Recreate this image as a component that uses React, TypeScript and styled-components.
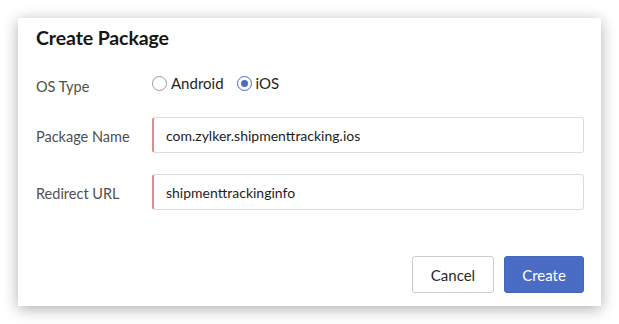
import React, { useState } from "react";
import styled, { createGlobalStyle } from "styled-components";

const Global = createGlobalStyle`
  html, body { margin: 0; padding: 0; background: #ffffff; }
  body { font-family: Lato, "Open Sans", "Liberation Sans", sans-serif; }
  * { box-sizing: border-box; }
`;

const Page = styled.div`
  width: 619px;
  height: 324px;
  padding: 18px;
`;

const Dialog = styled.div`
  width: 583px;
  height: 288px;
  background: #ffffff;
  box-shadow: 0 3px 14px rgba(0, 0, 0, 0.32);
  padding: 8px 17px 13px 18px;
  display: flex;
  flex-direction: column;
`;

const Title = styled.h1`
  margin: 0;
  font-size: 19.5px;
  line-height: 24px;
  font-weight: 700;
  color: #161616;
  letter-spacing: -0.1px;
`;

const Form = styled.div`
  margin-top: 20px;
  display: flex;
  flex-direction: column;
  gap: 21px;
`;

const Row = styled.div`
  display: grid;
  grid-template-columns: 116px 1fr;
  align-items: center;
`;

const Label = styled.div<{ $offset: number }>`
  font-size: 14.5px;
  line-height: 18px;
  color: #505050;
  padding-top: ${(p) => p.$offset}px;
`;

const RadioGroup = styled.div`
  display: flex;
  align-items: center;
  gap: 13px;
  height: 24px;
`;

const RadioOption = styled.label`
  display: flex;
  align-items: center;
  gap: 4px;
  font-size: 15px;
  color: #1e1e1e;
  cursor: pointer;
`;

const RadioCircle = styled.span<{ $checked: boolean }>`
  width: 15px;
  height: 15px;
  border-radius: 50%;
  border: 1px solid ${(p) => (p.$checked ? "#4a6cc4" : "#9a9a9a")};
  display: flex;
  align-items: center;
  justify-content: center;
  &::after {
    content: "";
    width: 7px;
    height: 7px;
    border-radius: 50%;
    background: ${(p) => (p.$checked ? "#4a6cc4" : "transparent")};
  }
`;

const Input = styled.input`
  width: 100%;
  height: 36px;
  border: 1px solid #dcdde3;
  border-left: 2px solid #e28a8a;
  border-radius: 3px;
  padding: 0 12px;
  font-family: inherit;
  font-size: 14px;
  color: #1e1e1e;
  outline: none;
  background: #ffffff;
`;

const Footer = styled.div`
  margin-top: auto;
  display: flex;
  justify-content: flex-end;
  gap: 10px;
`;

const Button = styled.button<{ $primary?: boolean }>`
  height: 37px;
  width: ${(p) => (p.$primary ? "80px" : "82px")};
  padding: 0;
  border-radius: 3px;
  font-family: inherit;
  font-size: 15px;
  cursor: pointer;
  border: 1px solid ${(p) => (p.$primary ? "#4566bd" : "#cccccc")};
  background: ${(p) => (p.$primary ? "#4a6cc4" : "#ffffff")};
  color: ${(p) => (p.$primary ? "#ffffff" : "#2a2a2a")};
`;

export default function App() {
  const [os, setOs] = useState<"android" | "ios">("ios");
  return (
    <>
      <Global />
      <Page>
        <Dialog>
          <Title>Create Package</Title>
          <Form>
            <Row>
              <Label $offset={8}>OS Type</Label>
              <RadioGroup>
                <RadioOption onClick={() => setOs("android")}>
                  <RadioCircle $checked={os === "android"} />
                  Android
                </RadioOption>
                <RadioOption onClick={() => setOs("ios")}>
                  <RadioCircle $checked={os === "ios"} />
                  iOS
                </RadioOption>
              </RadioGroup>
            </Row>
            <Row>
              <Label $offset={4}>Package Name</Label>
              <Input defaultValue="com.zylker.shipmenttracking.ios" />
            </Row>
            <Row>
              <Label $offset={4}>Redirect URL</Label>
              <Input defaultValue="shipmenttrackinginfo" />
            </Row>
          </Form>
          <Footer>
            <Button>Cancel</Button>
            <Button $primary>Create</Button>
          </Footer>
        </Dialog>
      </Page>
    </>
  );
}
